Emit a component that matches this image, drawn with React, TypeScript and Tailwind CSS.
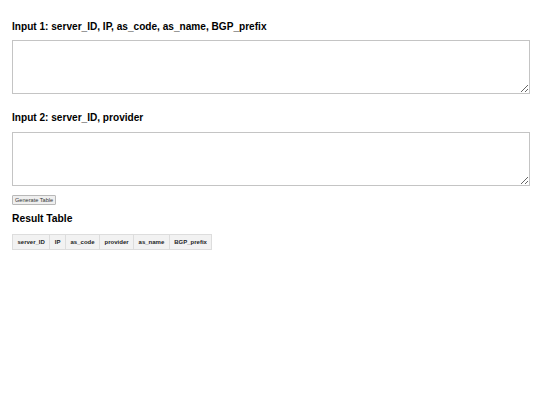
export default function App() {
  const cols = ["server_ID", "IP", "as_code", "provider", "as_name", "BGP_prefix"];
  return (
    <div className="min-h-[405px] bg-white px-[12px] pt-[21px] font-['Liberation_Sans',Arial,sans-serif] text-black">
      <h3 className="text-[10.1px] font-bold leading-[12px]">Input 1: server_ID, IP, as_code, as_name, BGP_prefix</h3>
      <textarea className="mt-[7px] block h-[54px] w-[518px] border border-[#c4c4c4] bg-white outline-none" />

      <h3 className="mt-[18px] text-[10.1px] font-bold leading-[12px]">Input 2: server_ID, provider</h3>
      <textarea className="mt-[8px] block h-[54px] w-[518px] border border-[#c4c4c4] bg-white outline-none" />

      <button className="mt-[9px] block h-[10px] rounded-[1px] border border-[#b8b8b8] bg-[#efefef] px-[2px] text-[5.6px] leading-[8px] text-[#333]">
        Generate Table
      </button>

      <h3 className="mt-[8px] text-[10.3px] font-bold leading-[12px]">Result Table</h3>

      {/* Result */}
      <table className="mt-[9px] border-collapse">
        <thead>
          <tr>
            {cols.map((c) => (
              <th key={c} className="border border-[#dddddd] bg-[#f2f2f2] px-[4.5px] py-[4px] text-left text-[6px] font-bold leading-[6px] text-[#222]">
                {c}
              </th>
            ))}
          </tr>
        </thead>
        <tbody></tbody>
      </table>
    </div>
  );
}
